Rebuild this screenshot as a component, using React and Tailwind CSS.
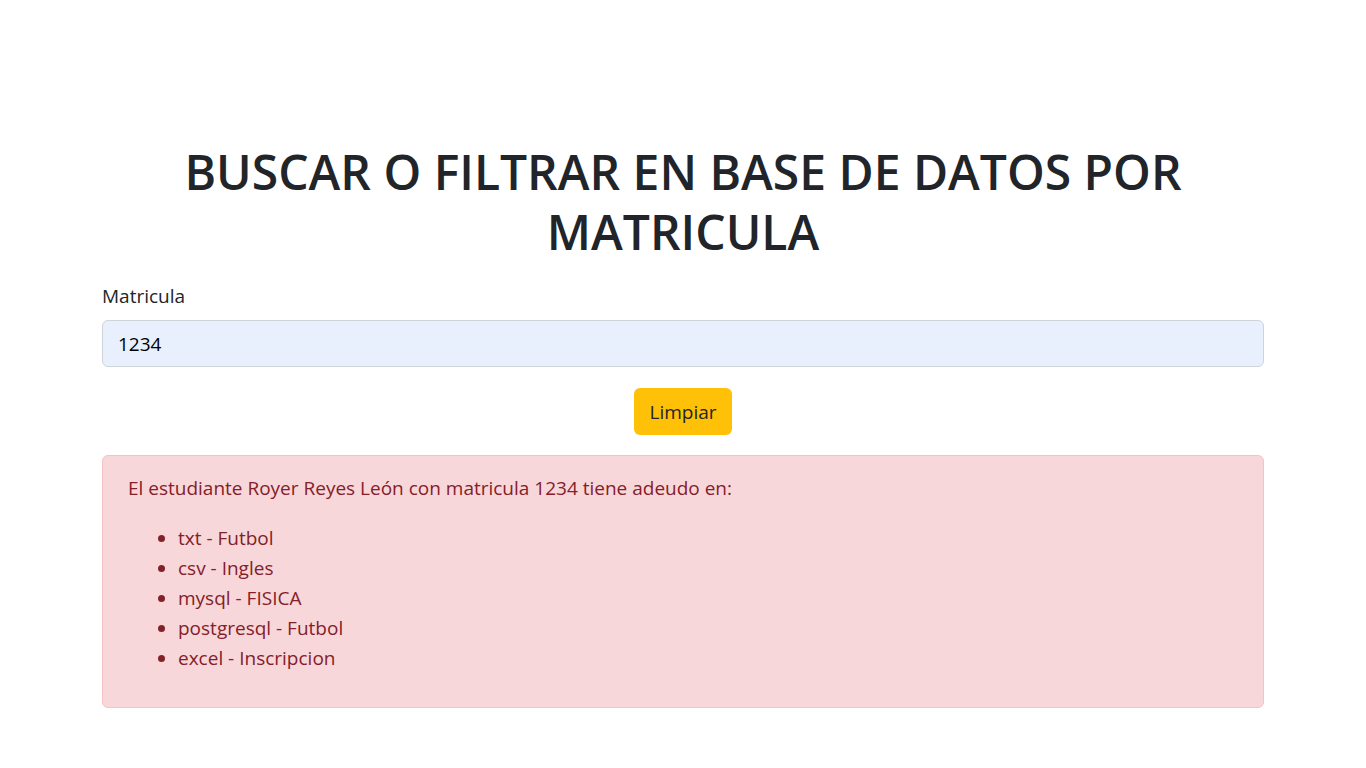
import React, { useState } from 'react';

const deudas = [
  { fuente: 'txt', materia: 'Futbol' },
  { fuente: 'csv', materia: 'Ingles' },
  { fuente: 'mysql', materia: 'FISICA' },
  { fuente: 'postgresql', materia: 'Futbol' },
  { fuente: 'excel', materia: 'Inscripcion' },
];

const App = () => {
  const [matricula, setMatricula] = useState('1234');

  return (
    <div className="min-h-screen bg-white text-[#212529] font-['Open_Sans',sans-serif] text-[19px] leading-[30px]">
      <div className="w-[1162px] mx-auto pt-[142px]">
        <h1 className="text-center text-[48px] leading-[60px] font-semibold mb-[19px]">
          BUSCAR O FILTRAR EN BASE DE DATOS POR MATRICULA
        </h1>

        <label className="block mb-[9px]">Matricula</label>
        <input
          value={matricula}
          onChange={(e) => setMatricula(e.target.value)}
          className="block w-full h-[47px] px-[15px] bg-[#e8f0fe] border border-[#ced4da] rounded-[6px] text-black outline-none"
        />

        <div className="flex justify-center mt-[21px]">
          <button
            onClick={() => setMatricula('')}
            className="h-[47px] px-[15px] bg-[#ffc107] rounded-[6px] text-[#212529]"
          >
            Limpiar
          </button>
        </div>

        {/* Resultado */}
        <div className="mt-[20px] bg-[#f8d7da] border border-[#f5c2c7] rounded-[6px] text-[#842029] px-[25px] pt-[17px] pb-[14px]">
          <p className="mb-[20px]">
            El estudiante Royer Reyes León con matricula 1234 tiene adeudo en:
          </p>
          <ul className="list-disc pl-[50px] mb-[20px]">
            {deudas.map((d) => (
              <li key={d.fuente}>
                {d.fuente} - {d.materia}
              </li>
            ))}
          </ul>
        </div>
      </div>
    </div>
  );
};

export default App;
